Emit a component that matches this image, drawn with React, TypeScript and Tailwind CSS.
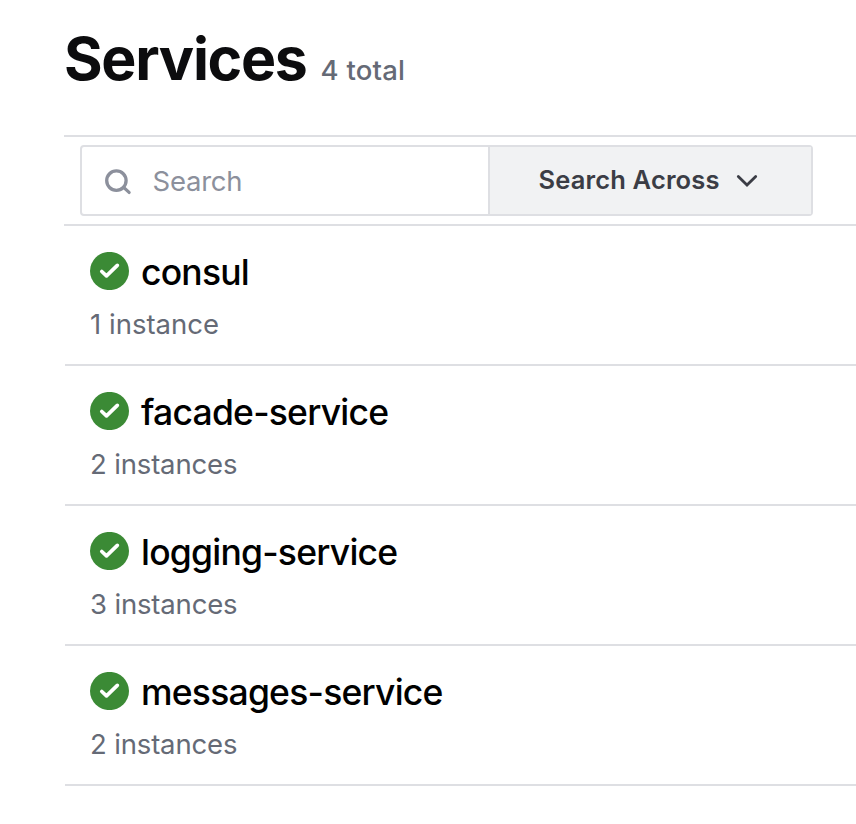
const services = [
  { name: "consul", info: "1 instance" },
  { name: "facade-service", info: "2 instances" },
  { name: "logging-service", info: "3 instances" },
  { name: "messages-service", info: "2 instances" },
];

function Check() {
  return (
    <svg className="mb-[2px] h-[38px] w-[39px] shrink-0" viewBox="0 0 39 38" fill="none">
      <ellipse cx="19.5" cy="19" rx="19.5" ry="19.1" fill="#3b8a35" />
      <path d="M11.8 19.5L16.5 23.8 27.3 13.4" stroke="#fff" strokeWidth="3.7" strokeLinecap="round" strokeLinejoin="round" />
    </svg>
  );
}

export default function App() {
  return (
    <div className="h-[824px] w-full overflow-hidden bg-white pl-16 font-['Inter',sans-serif]">
      <header className="flex h-[135px] items-baseline gap-[14px] pt-[23px]">
        <h1 className="text-[59px] font-bold leading-[72px] tracking-[-1.3px] text-[#0c0c0e]">Services</h1>
        <span className="text-[27.5px] font-medium leading-[36px] tracking-[0.2px] text-[#656a76]">4 total</span>
      </header>
      <div className="h-[91px] border-y-2 border-[#dedfe3] pl-4 pt-2">
        <div className="flex h-[71px] w-[733px] rounded-[4px] border-2 border-[#dedfe3]">
          <div className="flex flex-1 items-center pl-[22px] text-[27.5px] tracking-[-0.25px] text-[#8c909c]">
            <svg className="mr-[20.5px] size-[28px]" viewBox="0 0 28 28" fill="none" stroke="#8c909c" strokeWidth="3.3" strokeLinecap="round">
              <circle cx="12.4" cy="13.6" r="9.7" />
              <path d="M19.6 20.4l5.5 5" />
            </svg>
            <span className="pt-[3px]">Search</span>
          </div>
          <button className="flex w-[323px] items-center border-l-2 border-[#dedfe3] bg-[#f1f2f3] pl-[48.5px] text-[25.5px] font-semibold tracking-[0.15px] text-[#3b3d45]">
            Search Across
            <svg className="ml-[16.5px] size-[22px]" viewBox="0 0 22 22" fill="none" stroke="#3b3d45" strokeWidth="2.8" strokeLinecap="round">
              <path d="M2.3 6.5L11 15.1 19.7 6.5" />
            </svg>
          </button>
        </div>
      </div>
      <ul className="ml-px">
        {services.map((s) => (
          <li key={s.name} className="h-[140px] border-b-2 border-[#dedfe3] pl-[25px] pt-[25px]">
            <div className="flex h-[42px] items-center gap-3">
              <Check />
              <h2 className="pt-[2px] text-[35.5px] font-medium leading-[42px] tracking-[-0.78px] text-black">{s.name}</h2>
            </div>
            <p className={`mt-[13px] text-[27.5px] leading-[36px] text-[#656a76] ${s.info === "1 instance" ? "tracking-[0.02px]" : "tracking-[-0.16px]"}`}>{s.info}</p>
          </li>
        ))}
      </ul>
    </div>
  );
}
